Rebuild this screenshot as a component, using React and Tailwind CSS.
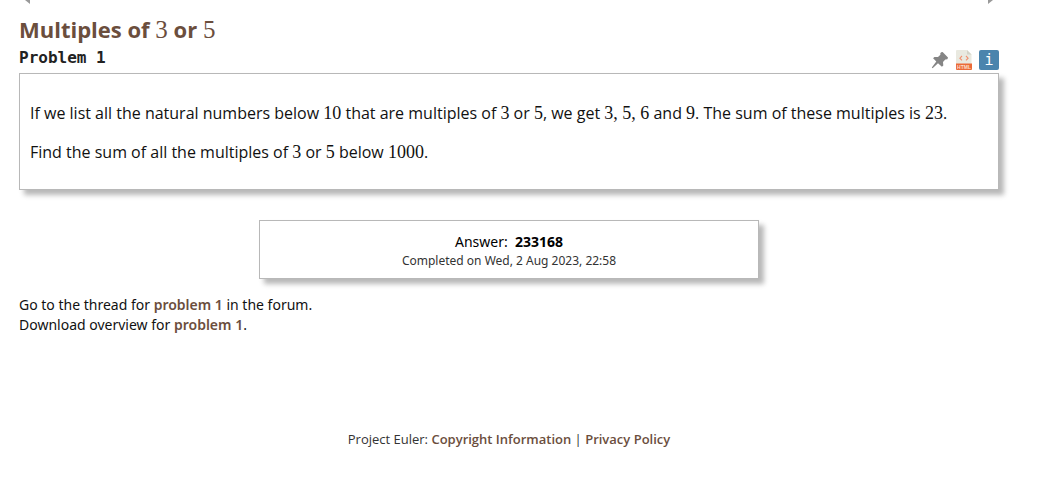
import React from "react";

function Num({ children }) {
  return <span className="font-['Liberation_Serif',serif] text-lg leading-none">{children}</span>;
}

function TitleNum({ children }) {
  return <span className="font-['Liberation_Serif',serif] text-[25px] leading-none font-normal">{children}</span>;
}

function TextLink({ href, children }) {
  return (
    <a href={href} className="font-semibold text-[#6b4e3d]">
      {children}
    </a>
  );
}

function PinIcon() {
  return (
    <svg viewBox="0 0 18 18" className="size-[18px]" aria-hidden="true">
      <path
        d="M10.2 1.2 11.6 1 17 6.600 16.400 8.200 14.300 8.600 12 11l.300 3.400-1.400 1.300-3.900-3.500L1.600 17.200.800 16.600 5.300 10.500 2.100 7.300 3.400 5.900l3.600.200L9.400 3.800l-.100-1.600z"
        fill="#858585"
      />
    </svg>
  );
}

function HtmlIcon() {
  return (
    <svg viewBox="0 0 16 20" className="h-5 w-4" aria-hidden="true">
      <path d="M1 0h10l4.500 4.500V14H0V1a1 1 0 0 1 1-1z" fill="#e9e9e0" />
      <path d="M11 0v4.500h4.500z" fill="#d3d3c8" />
      <path d="M6 6 3.900 8.200 6 10.400M10 6l2.100 2.200L10 10.400" fill="none" stroke="#f0916f" strokeWidth="1.100" />
      <path d="M0 13.500h16V19a1 1 0 0 1-1 1H1a1 1 0 0 1-1-1z" fill="#eb6a38" />
      <text x="8" y="18.900" textAnchor="middle" fontSize="5" fontWeight="700" fontFamily="Liberation Sans, sans-serif" fill="#fbdccd">
        HTML
      </text>
    </svg>
  );
}

export default function App() {
  return (
    <div className="min-h-screen bg-white pl-[19px] pr-[58px] font-['Open_Sans',sans-serif] text-base leading-5 text-[#111]">
      <nav className="flex h-1 justify-between px-[6px]">
        <a href="#previous" aria-label="Previous problem" className="block">
          <svg viewBox="0 0 6 4" className="h-1 w-1.5" aria-hidden="true">
            <path d="M0 0h5v4z" fill="#999" />
          </svg>
        </a>
        <a href="#next" aria-label="Next problem" className="block">
          <svg viewBox="0 0 6 4" className="h-1 w-1.5" aria-hidden="true">
            <path d="M1 0h5L1 4z" fill="#999" />
          </svg>
        </a>
      </nav>

      <main>
        <h1 className="pt-[9px] text-[22px] leading-8 font-bold text-[#6b4e3d]">
          Multiples of <TitleNum>3</TitleNum> or <TitleNum>5</TitleNum>
        </h1>

        <div className="flex items-end justify-between pb-[3px]">
          <h2 className="font-['DejaVu_Sans_Mono',monospace] text-base leading-[25px] font-bold text-[#222]">Problem 1</h2>
          <div className="flex items-center">
            <a href="#pin" aria-label="Permalink" className="mr-[7px]">
              <PinIcon />
            </a>
            <a href="#html" aria-label="Minimal HTML" className="mr-[7px]">
              <HtmlIcon />
            </a>
            <button
              type="button"
              className="flex size-5 items-center justify-center rounded-xs bg-[#4b84ad] font-['DejaVu_Sans_Mono',monospace] text-[15px] leading-5 text-white"
            >
              i
            </button>
          </div>
        </div>

        <section className="border border-[#b8b8b8] px-[10px] pt-[29px] pb-[27px] shadow-[5px_5px_5px_#b8b8b8]">
          <p>
            If we list all the natural numbers below <Num>10</Num> that are multiples of <Num>3</Num> or <Num>5</Num>, we get{" "}
            <Num>3, 5, 6</Num> and <Num>9</Num>. The sum of these multiples is <Num>23</Num>.
          </p>
          <p className="mt-[19px]">
            Find the sum of all the multiples of <Num>3</Num> or <Num>5</Num> below <Num>1000</Num>.
          </p>
        </section>

        <section className="mx-auto mt-[30px] w-[500px] max-w-full border border-[#b8b8b8] pt-[11px] pb-[8px] text-center font-['Noto_Sans',sans-serif] text-black shadow-[5px_5px_5px_#b8b8b8]">
          <p className="text-sm leading-5">
            Answer:&nbsp; <b>233168</b>
          </p>
          <p className="text-xs leading-[18px] text-[#333]">Completed on Wed, 2 Aug 2023, 22:58</p>
        </section>

        <div className="mt-4 font-['Noto_Sans',sans-serif] text-sm leading-5">
          <p>
            Go to the thread for <TextLink href="#thread">problem 1</TextLink> in the forum.
          </p>
          <p>
            Download overview for <TextLink href="#overview">problem 1</TextLink>.
          </p>
        </div>
      </main>

      <footer className="pt-[94px] text-center text-[13px] leading-5 text-[#333]">
        Project Euler: <TextLink href="#copyright">Copyright Information</TextLink> | <TextLink href="#privacy">Privacy Policy</TextLink>
      </footer>
    </div>
  );
}
